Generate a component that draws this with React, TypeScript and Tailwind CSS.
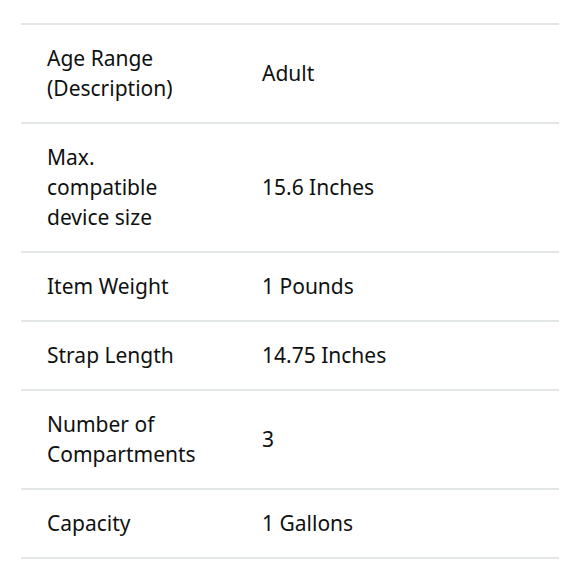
import React from 'react';

interface Spec {
  label: string;
  value: string;
}

const specs: Spec[] = [
  { label: 'Age Range (Description)', value: 'Adult' },
  { label: 'Max. compatible device size', value: '15.6 Inches' },
  { label: 'Item Weight', value: '1 Pounds' },
  { label: 'Strap Length', value: '14.75 Inches' },
  { label: 'Number of Compartments', value: '3' },
  { label: 'Capacity', value: '1 Gallons' },
];

const App: React.FC = () => {
  return (
    <div className="min-h-[580px] w-[580px] bg-white pt-[23px] pl-[21px] font-['Noto_Sans',sans-serif] text-[21px] leading-[30px] text-[#0f1111]">
      <div className="w-[538px] border-t-2 border-[#e3e6e6]">
        {specs.map((spec) => (
          <div key={spec.label} className="flex items-center border-b-2 border-[#e3e6e6] pt-[18px] pb-[19px]">
            {/* label column */}
            <div className="w-[241px] shrink-0 pl-[26px] pr-[56px]">{spec.label}</div>
            <div>{spec.value}</div>
          </div>
        ))}
      </div>
    </div>
  );
};

export default App;
